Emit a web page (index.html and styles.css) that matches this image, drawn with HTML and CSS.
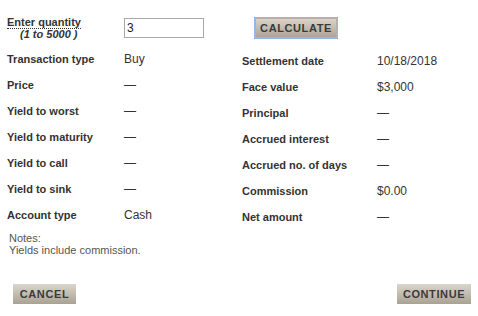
FILE: index.html
```html
<!DOCTYPE html>
<html>
<head>
<meta charset="utf-8">
<link rel="stylesheet" href="styles.css">
</head>
<body>
<div class="page">
  <div class="top">
    <div class="qty-label">
      <span class="qty-title">Enter quantity</span>
      <span class="qty-range">(1 to 5000 )</span>
    </div>
    <input class="qty-input" type="text" value="3">
    <button class="btn btn-calc">CALCULATE</button>
  </div>
  <div class="details">
    <div class="col col-left">
      <div class="row"><span class="lbl">Transaction type</span><span class="val">Buy</span></div>
      <div class="row"><span class="lbl">Price</span><span class="val">—</span></div>
      <div class="row"><span class="lbl">Yield to worst</span><span class="val">—</span></div>
      <div class="row"><span class="lbl">Yield to maturity</span><span class="val">—</span></div>
      <div class="row"><span class="lbl">Yield to call</span><span class="val">—</span></div>
      <div class="row"><span class="lbl">Yield to sink</span><span class="val">—</span></div>
      <div class="row"><span class="lbl">Account type</span><span class="val">Cash</span></div>
    </div>
    <div class="col col-right">
      <div class="row"><span class="lbl">Settlement date</span><span class="val">10/18/2018</span></div>
      <div class="row"><span class="lbl">Face value</span><span class="val">$3,000</span></div>
      <div class="row"><span class="lbl">Principal</span><span class="val">—</span></div>
      <div class="row"><span class="lbl">Accrued interest</span><span class="val">—</span></div>
      <div class="row"><span class="lbl">Accrued no. of days</span><span class="val">—</span></div>
      <div class="row"><span class="lbl">Commission</span><span class="val">$0.00</span></div>
      <div class="row"><span class="lbl">Net amount</span><span class="val">—</span></div>
    </div>
  </div>
  <div class="notes">
    <div>Notes:</div>
    <div>Yields include commission.</div>
  </div>
  <div class="actions">
    <button class="btn btn-cancel">CANCEL</button>
    <button class="btn btn-continue">CONTINUE</button>
  </div>
</div>
</body>
</html>
```

FILE: styles.css
```css
html, body {
  margin: 0;
  padding: 0;
  background: #ffffff;
}
body {
  font-family: "Liberation Sans", Arial, sans-serif;
  color: #333333;
  width: 478px;
  height: 316px;
  overflow: hidden;
}
.page {
  padding: 17px 7px 0 7px;
}
.top {
  display: flex;
  align-items: flex-start;
  height: 29px;
}
.qty-label {
  width: 117px;
  display: flex;
  flex-direction: column;
  align-items: flex-start;
  font-size: 11px;
  font-weight: bold;
  line-height: 12px;
}
.qty-title {
  border-bottom: 1px dotted #333;
  line-height: 11px;
}
.qty-range {
  font-style: italic;
  padding-left: 13px;
  line-height: 11px;
}
.qty-input {
  box-sizing: border-box;
  width: 80px;
  height: 20px;
  margin: 1px 0 0 0;
  border: 1px solid #a9a9a9;
  padding: 0 2px;
  font-family: "Liberation Sans", Arial, sans-serif;
  font-size: 12px;
  color: #222;
  outline: none;
}
.btn {
  box-sizing: border-box;
  height: 20px;
  border: none;
  padding: 0;
  background: linear-gradient(#dbd6cd, #a9a294);
  color: #3a3a3a;
  font-family: "Liberation Sans", Arial, sans-serif;
  font-size: 11px;
  font-weight: bold;
  letter-spacing: 0.6px;
  cursor: pointer;
}
.btn-calc {
  margin-left: 50px;
  width: 84px;
  height: 22px;
  border: 1px solid #93b4ea;
  box-shadow: inset 0 0 0 1px #b9b2a6;
}
.details {
  display: flex;
}
.col {
  display: flex;
  flex-direction: column;
}
.col-left {
  width: 235px;
}
.col-right {
  padding-top: 2px;
}
.row {
  display: flex;
  height: 26px;
  align-items: center;
}
.lbl {
  font-size: 11px;
  font-weight: bold;
  color: #333;
}
.col-left .lbl {
  width: 117px;
}
.col-right .lbl {
  width: 135px;
}
.val {
  font-size: 12px;
  color: #333;
}
.notes {
  margin-top: 2px;
  padding-left: 2px;
  font-size: 11px;
  line-height: 12px;
  color: #555;
}
.actions {
  display: flex;
  justify-content: space-between;
  margin-top: 28px;
  padding-left: 6px;
}
.btn-cancel {
  width: 63px;
}
.btn-continue {
  width: 74px;
}
```
